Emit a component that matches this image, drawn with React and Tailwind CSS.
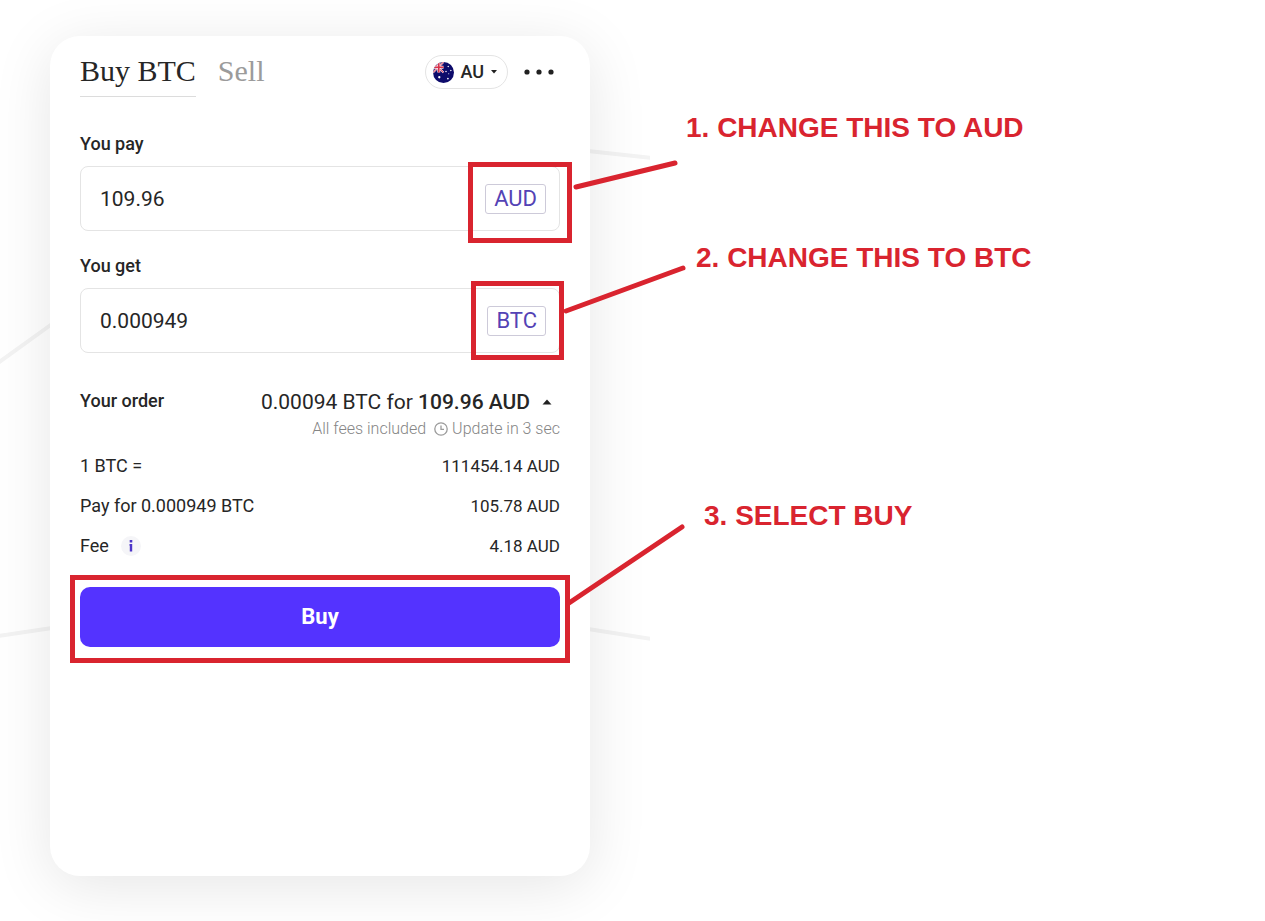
import { useState } from "react";

const ROWS = [
  { label: "1 BTC =", value: "111454.14 AUD" },
  { label: "Pay for 0.000949 BTC", value: "105.78 AUD" },
  { label: "Fee", value: "4.18 AUD", info: true },
];

function FlagAU() {
  return (
    <svg viewBox="0 0 20 20" className="size-[21px] shrink-0" aria-hidden="true">
      <defs>
        <clipPath id="flag-round">
          <circle cx="10" cy="10" r="10" />
        </clipPath>
      </defs>
      <g clipPath="url(#flag-round)">
        <rect width="20" height="20" fill="#0d0b6b" />
        <path d="M0 0 L10 10 M10 0 L0 10" stroke="#f3c9d3" strokeWidth="1.8" />
        <path d="M0 0 L10 10 M10 0 L0 10" stroke="#d8405c" strokeWidth="0.8" />
        <path d="M5.5 0 V10 M0 5 H10" stroke="#fbe4e8" strokeWidth="2.8" />
        <path d="M5.5 0 V10 M0 5 H10" stroke="#d8304a" strokeWidth="1.5" />
        <g fill="#fff">
          <circle cx="6" cy="14.5" r="1.1" />
          <circle cx="14.5" cy="4.2" r="0.7" />
          <circle cx="12.4" cy="9" r="0.7" />
          <circle cx="17" cy="8" r="0.7" />
          <circle cx="15" cy="11.2" r="0.5" />
          <circle cx="14.2" cy="15.8" r="0.8" />
        </g>
      </g>
    </svg>
  );
}

function AmountField({ id, label, initial, currency }) {
  const [value, setValue] = useState(initial);
  return (
    <div>
      <label htmlFor={id} className="block h-6 text-[18px] leading-6 font-medium">
        {label}
      </label>
      <div className="mt-2.5 flex h-[65px] items-center rounded-lg border border-[#e4e4e4] pr-[13px] pl-[19px]">
        <input
          id={id}
          value={value}
          onChange={(e) => setValue(e.target.value)}
          className="h-7 min-w-0 flex-1 bg-transparent text-[21px] leading-7 outline-none"
        />
        <button
          type="button"
          className="h-[30px] rounded-[3px] border border-[#cdcad9] px-2 text-[22px] leading-7 text-[#5443b5]"
        >
          {currency}
        </button>
      </div>
    </div>
  );
}

function BackgroundLines() {
  return (
    <svg
      className="pointer-events-none absolute top-0 left-0 h-[921px] w-[650px]"
      viewBox="0 0 650 921"
      fill="none"
      stroke="#f3f3f3"
      strokeWidth="4"
      aria-hidden="true"
    >
      <path d="M-2 363 L52 324" />
      <path d="M-2 636 L52 628" />
      <path d="M588 151 L652 158" />
      <path d="M588 629 L652 639" />
    </svg>
  );
}

function Callouts() {
  return (
    <svg
      className="pointer-events-none absolute top-0 left-0 h-[921px] w-[700px]"
      viewBox="0 0 700 921"
      fill="none"
      stroke="#d9242f"
      strokeWidth="5"
      strokeLinecap="round"
      aria-hidden="true"
    >
      <rect x="470.5" y="164.5" width="99" height="76" />
      <rect x="473.5" y="283.5" width="88" height="74" />
      <rect x="72.5" y="577.5" width="495" height="83" />
      <path d="M576 187 L675 163" />
      <path d="M566 311 L683 268" />
      <path d="M569 603 L682 527" />
    </svg>
  );
}

export default function App() {
  return (
    <main className="relative flex min-h-screen items-start overflow-hidden bg-white pt-9 pl-[50px] font-['Roboto',sans-serif] text-[#262626]">
      <BackgroundLines />
      <section className="relative min-h-[840px] w-full max-w-[540px] shrink-0 rounded-[30px] bg-white px-[30px] pt-[17px] shadow-[0_10px_60px_rgba(0,0,0,0.1)]">
        <header className="flex items-start justify-between">
          <nav className="flex gap-[22px] font-['Liberation_Serif',serif] text-[30px] leading-9">
            <a href="#buy" className="border-b border-[#dcdcdc] pb-[7px]">
              Buy BTC
            </a>
            <a href="#sell" className="text-[#9b9b9b]">
              Sell
            </a>
          </nav>
          <div className="flex items-center gap-4 pt-0.5 pr-1.5">
            <button
              type="button"
              className="flex h-[34px] items-center gap-1.5 rounded-full border border-[#e4e4e4] pr-[9px] pl-[7px] text-[18px] leading-6 font-medium"
            >
              <FlagAU />
              AU
              <svg viewBox="0 0 8 4" className="h-1 w-2" aria-hidden="true">
                <path d="M1 0 H7 L4 3.5 Z" fill="#212121" />
              </svg>
            </button>
            <button type="button" aria-label="More">
              <svg viewBox="0 0 30 6" className="h-1.5 w-[30px]" fill="#212121" aria-hidden="true">
                <circle cx="3" cy="3" r="2.6" />
                <circle cx="15" cy="3" r="2.6" />
                <circle cx="27" cy="3" r="2.6" />
              </svg>
            </button>
          </div>
        </header>

        <form className="mt-[35px] flex flex-col gap-[23px]" onSubmit={(e) => e.preventDefault()}>
          <AmountField id="pay" label="You pay" initial="109.96" currency="AUD" />
          <AmountField id="get" label="You get" initial="0.000949" currency="BTC" />
        </form>

        <div className="mt-[34px] flex items-start justify-between">
          <h2 className="text-[18px] leading-7 font-medium">Your order</h2>
          <div className="text-right">
            <button type="button" className="ml-auto flex items-center gap-3 pr-2 text-[21px] leading-[30px]">
              <span>
                0.00094 BTC for <strong className="font-medium">109.96 AUD</strong>
              </span>
              <svg viewBox="0 0 10 6" className="h-1.5 w-2.5" aria-hidden="true">
                <path d="M0.5 5.5 L5 0.5 L9.5 5.5 Z" fill="#212121" />
              </svg>
            </button>
            <p className="flex items-center justify-end text-[16px] leading-6 font-light text-[#858585]">
              All fees included
              <svg
                viewBox="0 0 14 14"
                className="mr-1 ml-2 size-3.5"
                fill="none"
                stroke="#9b9b9b"
                strokeWidth="1.3"
                aria-hidden="true"
              >
                <circle cx="7" cy="7" r="6.2" />
                <path d="M7 3.5 V7.3 H10" />
              </svg>
              Update in 3 sec
            </p>
          </div>
        </div>

        <dl className="mt-[5px] text-[18px] leading-10">
          {ROWS.map((row) => (
            <div key={row.label} className="flex justify-between">
              <dt className="flex items-center gap-3">
                {row.label}
                {row.info && (
                  <svg viewBox="0 0 20 20" className="size-5" aria-label="Fee details" role="img">
                    <circle cx="10" cy="10" r="10" fill="#f5f5f8" />
                    <path d="M8.5 8 H11.2 V15.5 H8.8 V9.8 H8.5 Z" fill="#4c35c8" />
                    <rect x="8.7" y="4" width="2.6" height="2.5" fill="#4c35c8" />
                  </svg>
                )}
              </dt>
              <dd className="text-[17px]">{row.value}</dd>
            </div>
          ))}
        </dl>

        <button
          type="button"
          className="mt-[21px] h-[60px] w-full rounded-[10px] bg-[#5433ff] text-[22px] leading-7 font-bold text-white"
        >
          Buy
        </button>
      </section>

      <ol className="relative ml-24 pt-[72px] font-['Liberation_Sans',sans-serif] text-[28px] leading-10 font-bold whitespace-nowrap text-[#d9242f]">
        <li>1. CHANGE THIS TO AUD</li>
        <li className="mt-[90px] pl-2.5">2. CHANGE THIS TO BTC</li>
        <li className="mt-[218px] pl-[18px]">3. SELECT BUY</li>
      </ol>
      <Callouts />
    </main>
  );
}
